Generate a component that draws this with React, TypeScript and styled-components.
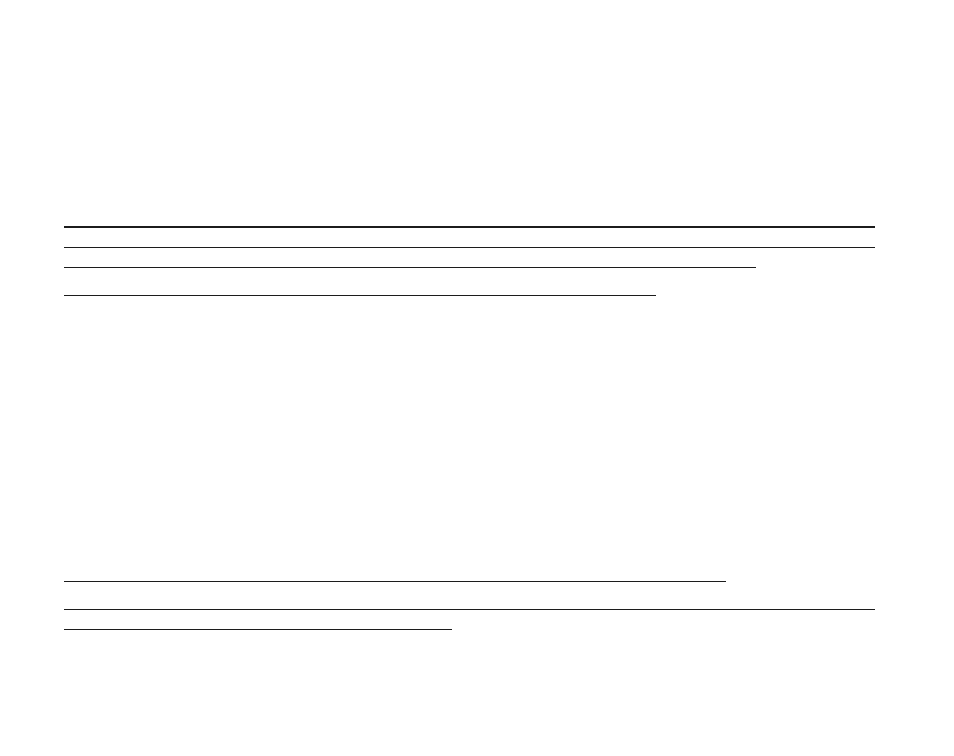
import * as React from 'react';
import styled, { createGlobalStyle } from 'styled-components';

const GlobalStyle = createGlobalStyle`
  html, body {
    margin: 0;
    padding: 0;
    background: #ffffff;
    font-family: "Liberation Sans", Arial, sans-serif;
  }
`;

const Page = styled.div`
  width: 954px;
  height: 756px;
  box-sizing: border-box;
  padding: 226px 0 0 64px;
  display: flex;
  flex-direction: column;
  align-items: flex-start;
`;

const Section = styled.div<{ $gap: number }>`
  display: flex;
  flex-direction: column;
  align-items: flex-start;
  margin-top: ${p => p.$gap}px;
`;

const Rule = styled.div<{ $width: number; $gap?: number; $thick?: boolean }>`
  width: ${p => p.$width}px;
  height: ${p => (p.$thick ? 2 : 1)}px;
  margin-top: ${p => p.$gap ?? 0}px;
  background: #1c1c1c;
`;

export default function App() {
  return (
    <>
      <GlobalStyle />
      <Page>
        <Section $gap={0}>
          <Rule $width={811} $thick />
          <Rule $width={811} $gap={19} />
          <Rule $width={692} $gap={19} />
          <Rule $width={592} $gap={27} />
        </Section>
        <Section $gap={285}>
          <Rule $width={662} />
          <Rule $width={811} $gap={27} />
          <Rule $width={388} $gap={19} />
        </Section>
      </Page>
    </>
  );
}
